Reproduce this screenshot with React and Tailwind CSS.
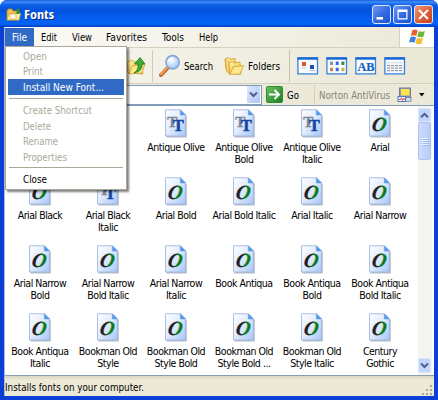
import React from "react";

const FONTS = [
  null, null, ["Antique Olive", "", "tt"], ["Antique Olive", "Bold", "tt"], ["Antique Olive", "Italic", "tt"], ["Arial", "", "o"],
  ["Arial Black", "", "o"], ["Arial Black", "Italic", "tt"], ["Arial Bold", "", "o"], ["Arial Bold Italic", "", "o"], ["Arial Italic", "", "o"], ["Arial Narrow", "", "o"],
  ["Arial Narrow", "Bold", "o"], ["Arial Narrow", "Bold Italic", "o"], ["Arial Narrow", "Italic", "o"], ["Book Antiqua", "", "o"], ["Book Antiqua", "Bold", "o"], ["Book Antiqua", "Bold Italic", "o"],
  ["Book Antiqua", "Italic", "o"], ["Bookman Old", "Style", "o"], ["Bookman Old", "Style Bold", "o"], ["Bookman Old", "Style Bold ...", "o"], ["Bookman Old", "Style Italic", "o"], ["Century", "Gothic", "o"],
];

function Defs() {
  return (
    <svg width="0" height="0" className="absolute">
      <defs>
        <linearGradient id="page" x1="0" y1="0" x2="1" y2="1">
          <stop offset="0" stopColor="#ffffff" />
          <stop offset="0.45" stopColor="#e3edfd" />
          <stop offset="1" stopColor="#a9c6f8" />
        </linearGradient>
        <linearGradient id="oo" x1="0" y1="0" x2="1" y2="0">
          <stop offset="0.45" stopColor="#1c2020" />
          <stop offset="0.6" stopColor="#0a7a1c" />
        </linearGradient>
        <linearGradient id="folder" x1="0" y1="0" x2="1" y2="1">
          <stop offset="0" stopColor="#fff3a8" />
          <stop offset="1" stopColor="#f0bd3c" />
        </linearGradient>
        <radialGradient id="lens" cx="0.4" cy="0.35" r="0.7">
          <stop offset="0" stopColor="#ffffff" />
          <stop offset="1" stopColor="#8cc4f6" />
        </radialGradient>
      </defs>
    </svg>
  );
}

function FontIcon({ kind }) {
  return (
    <svg width="24" height="30" viewBox="0 0 24 30" className="block shrink-0">
      <path d="M2.5 2H17.5L22.8 7V28.5H2.5Z" fill="#8d97a8" opacity="0.65" />
      <path d="M1.5 .8H16.5L21.3 5.6V27H1.5Z" fill="url(#page)" stroke="#9fb8e4" strokeWidth="0.9" />
      <path d="M16.3 .8V6H21.3Z" fill="#4d96ee" stroke="#6e9fe0" strokeWidth="0.6" />
      {kind === "o" ? (
        <text transform="translate(11.2 21.7) skewX(-10)" x="-1" y="0" textAnchor="middle" fontFamily="Liberation Serif" fontStyle="italic" fontWeight="bold" fontSize="20" fill="url(#oo)" stroke="url(#oo)" strokeWidth="0.3">O</text>
      ) : (
        <g fontFamily="Liberation Serif" fontWeight="bold" fontSize="15">
          <text x="3.2" y="17.5" fill="#7d8798" stroke="#7d8798" strokeWidth="0.4">T</text>
          <text x="8.9" y="22" fill="#1648a0" stroke="#1648a0" strokeWidth="0.6" fontSize="16">T</text>
        </g>
      )}
    </svg>
  );
}

function Folder({ up, w, h }) {
  return (
    <svg width={w} height={h} viewBox="0 0 20 20" className="block shrink-0">
      {up ? (
        <g>
          <path d="M1 6L6 4L8 6L15 5L17 18L2 17Z" fill="url(#folder)" stroke="#c99a2c" strokeWidth="0.8" />
          <path d="M3 18L6 10L19 8L16 17Z" fill="#ffe58a" stroke="#d2a136" strokeWidth="0.8" />
          <path d="M8 17Q13 14 12 8H8.5L14 1.5L19 8H16Q17 15 8 17Z" fill="#3fae35" stroke="#177a18" strokeWidth="0.8" />
        </g>
      ) : (
        <g fill="url(#folder)" stroke="#cf9f36" strokeWidth="0.8">
          <path d="M1 3L4 1.5L6 3L11 2.5L12 11L2 13Z" />
          <path d="M1.5 3L5 7L6 18.5L2.5 15Z" />
          <path d="M5 7L8 5.5L10 7L16 6L17 18H6Z" />
          <path d="M6 18.5L9 11L19.5 9.5L16 18Z" fill="#ffe78d" />
        </g>
      )}
    </svg>
  );
}

function TitleIcon() {
  return (
    <svg width="15" height="15" viewBox="0 0 15 15" className="block shrink-0">
      <path d="M1 4L2 2H6L7 4H13V13H1Z" fill="#f2c44c" stroke="#b98522" strokeWidth="0.8" />
      <path d="M1 13L3 6.5H14.5L13 13Z" fill="#fff0a5" stroke="#d5a336" strokeWidth="0.8" />
      <rect x="4" y="7" width="6" height="5" fill="#fffbe0" stroke="#c8a955" strokeWidth="0.6" />
      <path d="M9 4L12 1L14 4H13V7H10.5V4Z" fill="#36902e" />
    </svg>
  );
}

function Magnifier() {
  return (
    <svg width="24" height="24" viewBox="0 0 24 24" className="block shrink-0">
      <path d="M3 21L10 13.5" stroke="#b8662c" strokeWidth="4" strokeLinecap="round" />
      <path d="M3 20.3L9.5 13.3" stroke="#f0a05a" strokeWidth="2" strokeLinecap="round" />
      <circle cx="14.6" cy="8.3" r="6.7" fill="url(#lens)" stroke="#86a4d4" strokeWidth="1.6" />
      <path d="M10.5 7.5Q11.5 4.3 15 4" stroke="#fff" strokeWidth="1.5" fill="none" />
    </svg>
  );
}

function ViewIcon({ kind }) {
  const colors = ["#8c8fa0", "#3a68d8", "#30903a", "#c8893c", "#3a68d8", "#d8b030"];
  return (
    <svg width="22" height="18" viewBox="0 0 22 18" className="block shrink-0">
      <rect x="0.9" y="0.9" width="19.6" height="16" fill="#f8fbff" stroke="#3b83dc" strokeWidth="1.3" />
      <rect x="0.5" y="0.3" width="20.5" height="2.4" fill="#1767d6" />
      {kind === 0 && (
        <g>
          <rect x="5" y="5" width="4" height="4" fill="#dd512e" />
          <rect x="5" y="10.5" width="4" height="1" fill="#b8c0d0" />
          <rect x="13" y="8" width="4" height="4" fill="#234da8" />
          <rect x="12" y="13" width="6" height="1" fill="#b8c0d0" />
        </g>
      )}
      {kind === 1 && colors.map((c, i) => (
        <rect key={i} x={4 + (i % 3) * 5.7} y={i < 3 ? 4.6 : 10.8} width="3" height="3.4" fill={c} />
      ))}
      {kind === 2 && (
        <text x="10.9" y="14.3" textAnchor="middle" textLength="17" lengthAdjust="spacingAndGlyphs" fontFamily="Liberation Serif" fontWeight="bold" fontSize="13" fill="#1b60bf" stroke="#1b60bf" strokeWidth="0.2">AB</text>
      )}
      {kind === 3 && (
        <g fill="#929aa8">
          {[5, 8, 10.5, 13].map((y) => [3, 7, 11, 15].map((x) => <rect key={x + "-" + y} x={x} y={y} width="3.2" height="1.2" opacity={y === 5 ? 0.35 : 1} />))}
        </g>
      )}
    </svg>
  );
}

function Flag() {
  return (
    <svg width="19" height="18" viewBox="0 0 19 18" className="block">
      <path d="M4.3 2.2Q7.2 .7 9.7 2.4L8.3 8.1Q5.8 6.5 2.8 7.9Z" fill="#e8602c" />
      <path d="M10.7 3Q13.5 4.6 16.9 3.1L15.4 8.8Q12 10 9.3 8.6Z" fill="#6db83c" />
      <path d="M2.5 9Q5.5 7.7 8 9.2L6.6 14.7Q4 13.2 1 14.5Z" fill="#3f80df" />
      <path d="M9 9.8Q12 11.2 15.1 9.9L13.6 15.5Q10.6 17 7.6 15.3Z" fill="#f4bf2c" />
    </svg>
  );
}

function Norton() {
  return (
    <svg width="15" height="16" viewBox="0 0 15 16" className="block shrink-0">
      <rect x="2.5" y="1" width="11" height="9" fill="#8b98b8" stroke="#737d97" />
      <rect x="4" y="2" width="8.5" height="6.5" fill="#ffe34a" />
      <rect x="7" y="10.5" width="7" height="3.8" fill="#d5dae6" stroke="#6f7fa5" strokeWidth="0.8" />
      <rect x="1" y="9.5" width="7.5" height="5" fill="#eef4ff" stroke="#4b79c8" />
      <path d="M2 12.5H3.5L4.5 10.8L5.7 13.5L6.6 11.8H8" fill="none" stroke="#d63a2c" />
    </svg>
  );
}

function Chevron({ up }) {
  return (
    <svg width="9" height="7" viewBox="0 0 9 7" className="block">
      <path d={up ? "M1 5.3L4.5 1.8L8 5.3" : "M1 1.5L4.5 5L8 1.5"} fill="none" stroke="#4b618c" strokeWidth="2" />
    </svg>
  );
}

function TitleButton({ kind }) {
  return (
    <div className={"flex h-[19px] w-[19px] items-center justify-center rounded-[3px] border border-[#dfe8fb] " + (kind === "close" ? "bg-linear-to-br from-[#f0977a] via-[#e2603a] to-[#c63c12]" : "bg-linear-to-br from-[#7199f2] via-[#356be3] to-[#1f50cd]")}>
      <svg width="17" height="17" viewBox="0 0 17 17">
        {kind === "min" && <rect x="3.5" y="11" width="6.5" height="2.6" fill="#fff" />}
        {kind === "max" && <path d="M3.5 3.5H13.5V13.5H3.5ZM4.7 6V12.3H12.3V6Z" fill="#fff" fillRule="evenodd" />}
        {kind === "close" && <path d="M4 4L13 13M13 4L4 13" stroke="#fff" strokeWidth="2.1" />}
      </svg>
    </div>
  );
}

function MenuItem({ children, on, active }) {
  return (
    <div className={"mx-[2px] flex h-[15.5px] items-center pl-[15px] " + (active ? "bg-[#316ac5] text-white" : on ? "text-black" : "text-[#aca899]")}>
      {children}
    </div>
  );
}

function Label({ children, w }) {
  return (
    <svg width={w} height="14" className="block shrink-0 overflow-visible">
      <text x="0" y="11" textLength={w} lengthAdjust="spacingAndGlyphs" fill="currentColor">{children}</text>
    </svg>
  );
}

export default function App() {
  return (
    <div className="relative flex h-[400px] w-[438px] flex-col overflow-hidden rounded-t-[7px] bg-[#0b3fd6] font-['DejaVu_Sans_Condensed','DejaVu_Sans',sans-serif] text-[11px] leading-[12px] font-stretch-condensed text-black">
      <Defs />
      <header className="flex h-[27px] shrink-0 items-center bg-[linear-gradient(#1c5fdc_0,#3c8cf8_2px,#0d5fe8_5px,#0453dd_10px,#0560f2_20px,#0562f6_24px,#0340bd_27px)] pr-[5px] pl-[6px] pt-[2px]">
        <TitleIcon />
        <div className="ml-[3px] flex-1 font-['Open_Sans',sans-serif] text-[12px] font-bold text-white [text-shadow:1px_1px_#0b2b80]">
          <Label w={30}>Fonts</Label>
        </div>
        <div className="flex gap-[2px]">
          <TitleButton kind="min" />
          <TitleButton kind="max" />
          <TitleButton kind="close" />
        </div>
      </header>

      <div className="mx-[4px] mb-[4px] flex min-h-0 flex-1 flex-col border-l border-[#a8b8d8] bg-[#ece9d8]">
        <nav className="flex h-[21px] shrink-0 border-b border-[#d5d1bf] bg-linear-to-r from-[#fbfaf7] to-[#ece9d8]">
          <div className="flex h-[18px] w-[29px] items-center self-center bg-[#316ac5] pl-[7px] text-white"><Label w={15}>File</Label></div>
          <div className="flex flex-1 items-center pl-[7px]">
            <Label w={16}>Edit</Label>
            <div className="w-[15px]" /><Label w={20}>View</Label>
            <div className="w-[14px]" /><Label w={41}>Favorites</Label>
            <div className="w-[15px]" /><Label w={22}>Tools</Label>
            <div className="w-[15px]" /><Label w={19}>Help</Label>
          </div>
          <div className="flex w-[35px] items-center justify-center border-l border-[#d5d1bf] bg-white"><Flag /></div>
        </nav>

        <div className="flex h-[36px] shrink-0 items-center border-b border-[#d4d0be] bg-linear-to-r from-[#f7f6f0] to-[#ebe8d7] pl-[121px]">
          <Folder up w={20} h={20} />
          <div className="ml-[6px] h-[32px] w-px bg-[#cfcbb9]" />
          <div className="ml-[5px]"><Magnifier /></div>
          <div className="ml-[2px]"><Label w={29}>Search</Label></div>
          <div className="ml-[11px]"><Folder w={20} h={20} /></div>
          <div className="ml-[4px]"><Label w={32}>Folders</Label></div>
          <div className="ml-[9px] h-[32px] w-px bg-[#c6c2b0]" />
          <div className="ml-[7px] flex gap-[7px]">
            <ViewIcon kind={0} /><ViewIcon kind={1} /><ViewIcon kind={2} /><ViewIcon kind={3} />
          </div>
        </div>

        <div className="flex h-[22px] shrink-0 items-center border-b border-[#7f9db9] bg-[#ece9d8]">
          <div className="flex h-[20px] w-[257px] items-center justify-end border border-[#7f9db9] bg-white pr-px">
            <div className="flex h-[17px] w-[13px] items-center justify-center rounded-[1px] bg-linear-to-br from-[#dde8ff] to-[#aec6f6]"><Chevron /></div>
          </div>
          <div className="ml-[4px] flex h-[17px] w-[17px] items-center justify-center rounded-[2px] border border-[#2b8c30] bg-linear-to-br from-[#6cbd62] to-[#15801e]">
            <svg width="13" height="13" viewBox="0 0 13 13"><path d="M1 6.5H11M6.5 2L11 6.5L6.5 11" fill="none" stroke="#fff" strokeWidth="1.9" /></svg>
          </div>
          <div className="ml-[4px]"><Label w={12}>Go</Label></div>
          <div className="ml-[15px] h-[19px] w-px bg-[#d3cfbd]" />
          <div className="ml-[4px] text-[#858479]"><Label w={71}>Norton AntiVirus</Label></div>
          <div className="ml-[7px]"><Norton /></div>
          <svg width="6" height="4" viewBox="0 0 6 4" className="ml-[7px]"><path d="M0 0H5.5L2.75 3.5Z" fill="#000" /></svg>
        </div>

        <main className="flex min-h-0 flex-1 border-b border-[#8a9bb4] bg-white">
          <div className="grid w-[413px] grid-cols-[repeat(6,68px)] auto-rows-[68px] content-start pt-[3px] pl-[1px]">
            {FONTS.map((font, i) => (
              <div key={i} className="flex flex-col items-center whitespace-nowrap text-center">
                {font && <FontIcon kind={font[2]} />}
                {font && <div className="mt-[2px] text-[10.5px] tracking-[-0.48px]">{font[0]}<br />{font[1]}</div>}
              </div>
            ))}
          </div>
          <div className="flex w-[14px] flex-col bg-[#f5f4ee] py-[2px] pr-px">
            <div className="flex h-[14px] items-center justify-center rounded-[2px] border border-[#dbe5fb] bg-[#c3d4fd]"><Chevron up /></div>
            <div className="flex h-[38px] flex-col items-center justify-center gap-px rounded-[2px] border border-[#b0c3ee] bg-linear-to-r from-[#cddbff] to-[#b8ccfa]">
              {[0, 1, 2, 3].map((n) => <div key={n} className="h-px w-[6px] bg-[#eef4fe] shadow-[1px_1px_#9fb6e8]" />)}
            </div>
            <div className="flex-1" />
            <div className="flex h-[15px] items-center justify-center rounded-[2px] border border-[#dbe5fb] bg-[#c3d4fd]"><Chevron /></div>
          </div>
        </main>

        <footer className="flex h-[20px] shrink-0 items-center justify-between bg-[linear-gradient(#d8d4c2,#ece9d8_4px)] pt-[2px]">
          <Label w={139}>Installs fonts on your computer.</Label>
          <svg width="12" height="12" viewBox="0 0 12 12" className="self-end" fill="#aaa694">
            {[[8, 1], [8, 5], [4, 5], [8, 9], [4, 9], [0, 9]].map(([x, y]) => <rect key={x + "-" + y} x={x} y={y} width="2" height="2" />)}
          </svg>
        </footer>
      </div>

      <div className="absolute top-[46px] left-[5px] flex h-[144px] w-[122px] flex-col border border-[#aca899] bg-white shadow-[2px_2px_2px_rgba(0,0,0,0.5)]">
        <div className="h-[1px]" />
        <MenuItem><Label w={24}>Open</Label></MenuItem>
        <MenuItem><Label w={20}>Print</Label></MenuItem>
        <MenuItem active><Label w={81}>Install New Font...</Label></MenuItem>
        <div className="mx-[3px] mt-[3px] mb-[4px] h-px bg-[#aca899]" />
        <MenuItem><Label w={69}>Create Shortcut</Label></MenuItem>
        <MenuItem><Label w={28}>Delete</Label></MenuItem>
        <MenuItem><Label w={35}>Rename</Label></MenuItem>
        <MenuItem><Label w={44}>Properties</Label></MenuItem>
        <div className="mx-[3px] mt-[2px] mb-[4px] h-px bg-[#aca899]" />
        <MenuItem on><Label w={24}>Close</Label></MenuItem>
      </div>
    </div>
  );
}
